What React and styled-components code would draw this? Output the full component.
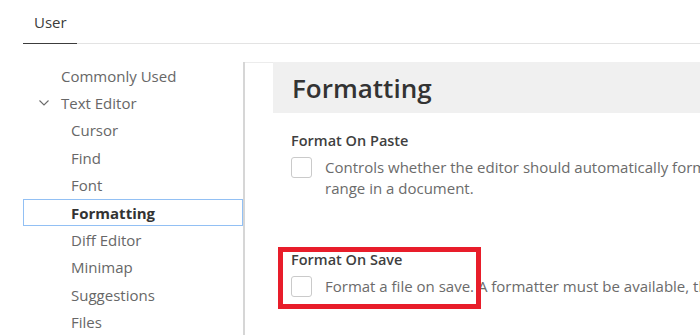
import React from 'react';
import styled, { createGlobalStyle } from 'styled-components';

const GlobalStyle = createGlobalStyle`
  html, body {
    margin: 0;
    padding: 0;
    background: #fff;
  }
  body {
    font-family: "Open Sans", "Noto Sans", sans-serif;
    overflow: hidden;
  }
`;

const Page = styled.div`
  width: 700px;
  height: 335px;
  overflow: hidden;
`;

const TabBar = styled.div`
  display: flex;
  margin-left: 23px;
  height: 43px;
  border-bottom: 1px solid #e3e3e3;
`;

const Tab = styled.div`
  display: flex;
  align-items: center;
  padding: 0 10px 0 11px;
  margin-bottom: -1px;
  font-size: 15px;
  color: #3b3b3b;
  border-bottom: 1px solid ${props => (props.active ? '#3c3c3c' : 'transparent')};
`;

const Body = styled.div`
  display: flex;
  padding-top: 18px;
`;

const Sidebar = styled.ul`
  list-style: none;
  margin: 0 0 0 23px;
  padding: 0;
  width: 220px;
  flex: none;
`;

const NavItem = styled.li`
  display: flex;
  align-items: center;
  box-sizing: border-box;
  height: 27.4px;
  padding-left: ${props => (props.child ? 47 : props.parent ? 15 : 37)}px;
  font-size: 15px;
  color: ${props => (props.selected ? '#333' : '#676767')};
  font-weight: ${props => (props.selected ? 700 : 400)};
  border: 1px solid ${props => (props.selected ? '#92c0f4' : 'transparent')};
  white-space: nowrap;

  svg {
    margin-right: 12px;
  }
`;

const Divider = styled.div`
  width: 2px;
  background: #d6d6d6;
  flex: none;
`;

const Content = styled.div`
  flex: 1;
  min-width: 0;
  overflow: hidden;
  box-shadow: inset 0 1px 0 #ececec;
  padding-left: 28px;
`;

const SectionHeader = styled.h2`
  margin: 0;
  height: 51px;
  display: flex;
  align-items: center;
  padding-left: 19px;
  background: #f0f0f0;
  font-size: 26px;
  font-weight: 600;
  color: #333;
  white-space: nowrap;
`;

const SettingList = styled.div`
  display: flex;
  flex-direction: column;
  gap: 51px;
  padding: 18px 0 0 18px;
`;

const Setting = styled.div`
  position: relative;
`;

const SettingLabel = styled.div`
  font-size: 14.5px;
  font-weight: 600;
  line-height: 20px;
  color: #3f3f3f;
  white-space: nowrap;
`;

const SettingRow = styled.div`
  display: flex;
  align-items: flex-start;
  gap: 13px;
  margin-top: 6px;
`;

const Checkbox = styled.span`
  flex: none;
  width: 21px;
  height: 21px;
  box-sizing: border-box;
  border: 1px solid #cacaca;
  border-radius: 3px;
  background: #fff;
`;

const Description = styled.div`
  font-size: 15px;
  line-height: 21px;
  color: #6b6b6b;
  white-space: nowrap;
`;

const Highlight = styled.div`
  position: absolute;
  left: -13px;
  top: -3px;
  width: 203px;
  height: 62px;
  box-sizing: border-box;
  border: 5px solid #e81d2a;
  pointer-events: none;
`;

const Chevron = () => (
  <svg width="10" height="6" viewBox="0 0 10 6" fill="none">
    <polyline points="0.5,0.5 5,5 9.5,0.5" stroke="#6b6b6b" strokeWidth="1.1" />
  </svg>
);

const navItems = [
  { label: 'Commonly Used' },
  { label: 'Text Editor', parent: true },
  { label: 'Cursor', child: true },
  { label: 'Find', child: true },
  { label: 'Font', child: true },
  { label: 'Formatting', child: true, selected: true },
  { label: 'Diff Editor', child: true },
  { label: 'Minimap', child: true },
  { label: 'Suggestions', child: true },
  { label: 'Files', child: true }
];

const App = () => {
  return (
    <Page>
      <GlobalStyle />
      <TabBar>
        <Tab active>User</Tab>
      </TabBar>
      <Body>
        <Sidebar>
          {navItems.map(item => (
            <NavItem
              key={item.label}
              child={item.child}
              parent={item.parent}
              selected={item.selected}
            >
              {item.parent && <Chevron />}
              {item.label}
            </NavItem>
          ))}
        </Sidebar>
        <Divider />
        <Content>
          <SectionHeader>Formatting</SectionHeader>
          <SettingList>
            <Setting>
              <SettingLabel>Format On Paste</SettingLabel>
              <SettingRow>
                <Checkbox />
                <Description>
                  Controls whether the editor should automatically format the pasted content. A formatter must be available and the formatter should be able to format a
                  <br />
                  range in a document.
                </Description>
              </SettingRow>
            </Setting>
            <Setting>
              <Highlight />
              <SettingLabel>Format On Save</SettingLabel>
              <SettingRow>
                <Checkbox />
                <Description>
                  Format a file on save. A formatter must be available, the file must not be saved after delay, and the editor must not be shutting down.
                </Description>
              </SettingRow>
            </Setting>
          </SettingList>
        </Content>
      </Body>
    </Page>
  );
};

export default App;
